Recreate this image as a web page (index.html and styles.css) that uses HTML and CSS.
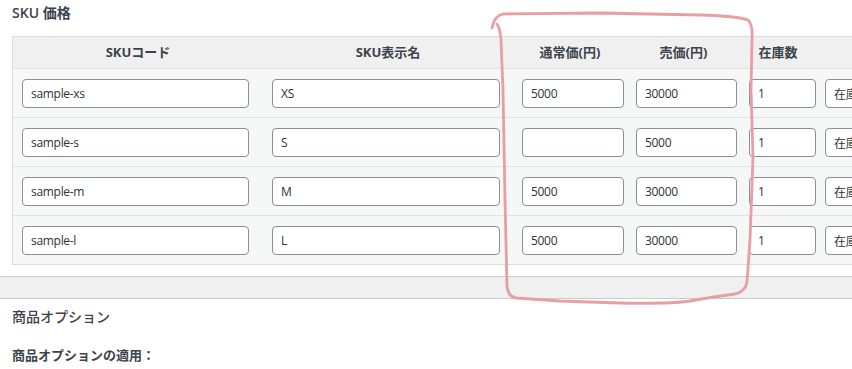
FILE: index.html
```html
<!DOCTYPE html>
<html lang="ja">
<head>
    <meta charset="UTF-8">
    <title>SKU 価格</title>
    <link rel="stylesheet" href="styles.css">
</head>
<body>
    <div class="box">
        <h3 class="box-title">SKU 価格</h3>
        <div class="sku-wrap">
            <div class="sku">
                <div class="sku-row sku-head">
                    <div>SKUコード</div>
                    <div>SKU表示名</div>
                    <div>通常価(円)</div>
                    <div>売価(円)</div>
                    <div>在庫数</div>
                    <div></div>
                </div>
                <div class="sku-row">
                    <div><input type="text" value="sample-xs"></div>
                    <div><input type="text" value="XS"></div>
                    <div><input type="text" value="5000"></div>
                    <div><input type="text" value="30000"></div>
                    <div><input type="text" value="1"></div>
                    <div><input type="text" value="在庫あり"></div>
                </div>
                <div class="sku-row">
                    <div><input type="text" value="sample-s"></div>
                    <div><input type="text" value="S"></div>
                    <div><input type="text" value=""></div>
                    <div><input type="text" value="5000"></div>
                    <div><input type="text" value="1"></div>
                    <div><input type="text" value="在庫あり"></div>
                </div>
                <div class="sku-row">
                    <div><input type="text" value="sample-m"></div>
                    <div><input type="text" value="M"></div>
                    <div><input type="text" value="5000"></div>
                    <div><input type="text" value="30000"></div>
                    <div><input type="text" value="1"></div>
                    <div><input type="text" value="在庫あり"></div>
                </div>
                <div class="sku-row">
                    <div><input type="text" value="sample-l"></div>
                    <div><input type="text" value="L"></div>
                    <div><input type="text" value="5000"></div>
                    <div><input type="text" value="30000"></div>
                    <div><input type="text" value="1"></div>
                    <div><input type="text" value="在庫あり"></div>
                </div>
            </div>
        </div>
    </div>
    <div class="band"></div>
    <div class="box opt">
        <h3 class="opt-title">商品オプション</h3>
        <p class="opt-label">商品オプションの適用：</p>
    </div>
    <!-- 手書きの赤い囲み -->
    <svg class="marker" width="852" height="369" viewBox="0 0 852 369">
        <path d="M492 28 Q494 16 503 14 L600 13 L700 15 Q738 16 748 20 Q753 24 752 40 L751 90 L753 157 L750 240 L747 282 Q745 292 735 294 Q712 297 690 301 Q670 304 620 303 L560 301 L516 298 Q508 297 507 286 L505 200 L503 90 L501 40 Q500 28 497 24"
              fill="none" stroke="#e79ea4" stroke-width="2.8" stroke-linecap="round" stroke-linejoin="round"/>
    </svg>
</body>
</html>
```

FILE: styles.css
```css
html, body {
    margin: 0;
    padding: 0;
    overflow: hidden;
}
body {
    font-family: "Open Sans", "Noto Sans CJK JP", sans-serif;
    font-size: 13px;
    color: #3c434a;
    background: #fff;
    position: relative;
    width: 852px;
    height: 369px;
}
.box {
    padding: 0 0 0 12px;
}
.box-title {
    margin: 0;
    padding-top: 4px;
    height: 32px;
    font-size: 14px;
    font-weight: 600;
    line-height: 18px;
}
/* 右端は画面外まで続くので切り取る */
.sku-wrap {
    width: 840px;
    overflow: hidden;
}
.sku {
    width: 900px;
    border: 1px solid #dcdcde;
    background: #f6f7f7;
}
.sku-row {
    display: grid;
    grid-template-columns: 250px 250px 114px 113px 76px 110px;
    border-top: 1px solid #e2e2e4;
}
.sku-head {
    border-top: none;
    background: #f0f0f1;
    height: 31px;
    font-weight: 700;
    color: #3c434a;
}
.sku-head div {
    text-align: center;
    line-height: 30px;
}
.sku-row > div {
    padding: 10px 0 9px 9px;
}
.sku-head > div {
    padding: 0;
}
.sku-row input {
    box-sizing: border-box;
    display: block;
    height: 29px;
    margin: 0;
    padding: 0 8px;
    border: 1px solid #8c8f94;
    border-radius: 4px;
    background: #fff;
    font-family: "Open Sans", "Noto Sans CJK JP", sans-serif;
    font-size: 12px;
    letter-spacing: -0.3px;
    color: #2c3338;
    outline: none;
}
.sku-row > div:nth-child(1) input { width: 227px; }
.sku-row > div:nth-child(2) input { width: 228px; }
.sku-row > div:nth-child(3) input { width: 102px; }
.sku-row > div:nth-child(4) input { width: 101px; }
.sku-row > div:nth-child(5) input { width: 67px; }
.sku-row > div:nth-child(6) input { width: 100px; }
.band {
    margin-top: 11px;
    height: 21px;
    background: #f0f0f1;
    border-top: 1px solid #c9cacc;
    border-bottom: 1px solid #c9cacc;
}
.opt-title {
    margin: 0;
    padding-top: 9px;
    font-size: 14px;
    font-weight: 500;
    line-height: 18px;
}
.opt-label {
    margin: 20px 0 0;
    font-size: 13px;
    font-weight: 700;
    line-height: 18px;
}
.marker {
    position: absolute;
    left: 0;
    top: 0;
    pointer-events: none;
}
```
